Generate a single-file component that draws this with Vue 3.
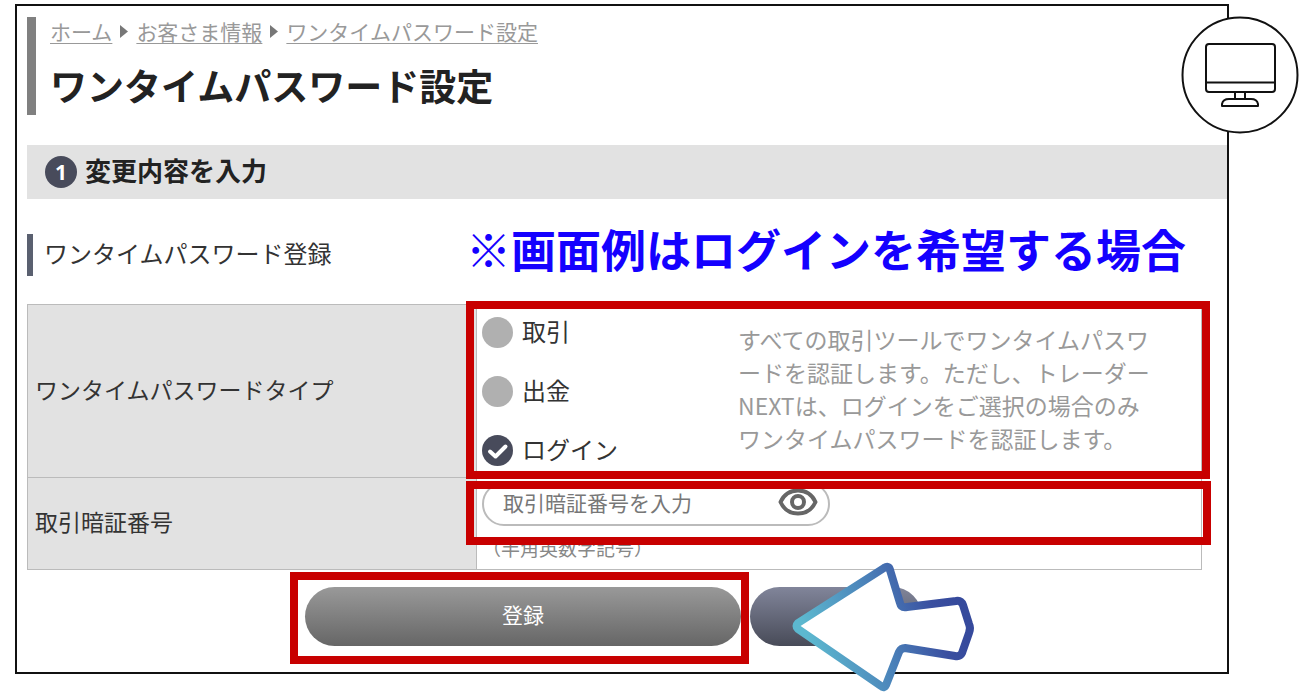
<script setup>
import { ref } from 'vue'

const crumbs = ['ホーム', 'お客さま情報', 'ワンタイムパスワード設定']
const types = [
  { value: 'trade', label: '取引' },
  { value: 'withdraw', label: '出金' },
  { value: 'login', label: 'ログイン' },
]
const selected = ref('login')
const pin = ref('')
const visible = ref(false)
</script>

<template>
  <div class="page">
    <main class="frame">
      <header class="head">
        <nav class="crumbs">
          <template v-for="(c, i) in crumbs" :key="c">
            <svg v-if="i" class="sep" viewBox="0 0 8 13" aria-hidden="true"><path d="M0 0L8 6.500L0 13Z" fill="#777" /></svg>
            <a href="#">{{ c }}</a>
          </template>
        </nav>
        <h1>ワンタイムパスワード設定</h1>
      </header>

      <h2 class="step"><span class="badge">1</span><span class="step-text">変更内容を入力</span></h2>

      <div class="subrow">
        <h3>ワンタイムパスワード登録</h3>
        <p class="note">※画面例はログインを希望する場合</p>
      </div>

      <table>
        <tbody>
          <tr class="row-type">
            <th scope="row">ワンタイムパスワードタイプ</th>
            <td>
              <div class="type">
                <div class="options">
                  <label v-for="t in types" :key="t.value" class="option">
                    <input v-model="selected" type="radio" name="otp-type" :value="t.value" />
                    <svg v-if="selected === t.value" class="tick" viewBox="0 0 31 31" aria-hidden="true">
                      <path d="M8 16.500L13.500 21.500L23.500 11.500" fill="none" stroke="#fff" stroke-width="4" stroke-linecap="round" stroke-linejoin="round" />
                    </svg>
                    <span>{{ t.label }}</span>
                  </label>
                </div>
                <p class="desc">すべての取引ツールでワンタイムパスワ<br />ードを認証します。ただし、トレーダー<br />NEXTは、ログインをご選択の場合のみ<br />ワンタイムパスワードを認証します。</p>
              </div>
              <div class="mark mark-type"></div>
            </td>
          </tr>
          <tr class="row-pin">
            <th scope="row"><label for="pin">取引暗証番号</label></th>
            <td>
              <div class="field">
                <input id="pin" v-model="pin" :type="visible ? 'text' : 'password'" placeholder="取引暗証番号を入力" />
                <button type="button" class="eye" aria-label="表示" @click="visible = !visible">
                  <svg viewBox="0 0 40 28" fill="none" stroke="#666" stroke-width="4">
                    <path d="M2.500 14C6 6.500 12.500 2.500 20 2.500S34 6.500 37.500 14C34 21.500 27.500 25.500 20 25.500S6 21.500 2.500 14Z" stroke-linejoin="round" />
                    <circle cx="20" cy="14" r="6" />
                  </svg>
                </button>
              </div>
              <p class="hint">（半角英数字記号）</p>
              <div class="mark mark-pin"></div>
            </td>
          </tr>
        </tbody>
      </table>

      <div class="actions">
        <div class="primary">
          <button type="button" class="btn submit">登録</button>
          <div class="mark mark-submit"></div>
        </div>
        <button type="button" class="btn back" aria-label="戻る"></button>
        <svg class="arrow" viewBox="0 0 184 132" aria-hidden="true">
          <defs>
            <linearGradient id="arrow-stroke" gradientUnits="userSpaceOnUse" x1="20" y1="90" x2="165" y2="45">
              <stop offset="0" stop-color="#5cb8cf" />
              <stop offset="0.500" stop-color="#4a7fb8" />
              <stop offset="0.850" stop-color="#3a4fa0" />
              <stop offset="1" stop-color="#364a9c" />
            </linearGradient>
          </defs>
          <path d="M6 61Q3 64 6 67L89 124Q92 127 94 123L107 90Q109 86 113 86L163 94Q168 95 170 91L177 71Q179 66 177 62L171 43Q169 38 164 39L115 45Q109 46 108 41L98 8Q97 3 92 6Z" fill="#fff" stroke="url(#arrow-stroke)" stroke-width="8" stroke-linejoin="round" />
        </svg>
      </div>

      <svg class="device" viewBox="0 0 118 118" aria-hidden="true">
        <circle cx="59" cy="59" r="57.500" fill="#fff" stroke="#111" stroke-width="2" />
        <g fill="none" stroke="#111" stroke-width="2" stroke-linejoin="round">
          <rect x="25" y="28" width="69" height="48" rx="3" />
          <path d="M25 66.500H94M54 76V83M64 76V83M41 90V88Q42 83 48 83H70Q76 83 77 88V90Z" />
        </g>
      </svg>
    </main>
  </div>
</template>

<style>
body {
  margin: 0;
  background: #fff;
}
</style>

<style scoped>
* {
  box-sizing: border-box;
}
.page {
  padding: 4px 70px 23px 15px;
  font-family: "Noto Sans CJK JP", sans-serif;
  color: #333;
}
.frame {
  position: relative;
  border: 2px solid #111;
  padding: 11px 0 26px 10px;
}
h1, h2, h3, p {
  margin: 0;
}
.head {
  border-left: 9px solid #808080;
  padding: 0 0 2px 14px;
}
.crumbs {
  display: flex;
  align-items: center;
  gap: 8px;
  font-size: 21px;
  line-height: 28px;
}
.crumbs a {
  color: #999;
  text-underline-offset: 3px;
  text-decoration-thickness: 1px;
}
.sep {
  width: 8px;
  height: 13px;
}
h1 {
  margin-top: 12px;
  font-size: 37px;
  line-height: 56px;
  font-weight: 700;
  color: #222;
}
.step {
  display: flex;
  align-items: center;
  gap: 8px;
  margin-top: 30px;
  padding: 0 18px;
  height: 54px;
  background: #e2e2e2;
  font-size: 26px;
  font-weight: 700;
  color: #222;
}
.step-text {
  padding-bottom: 6px;
}
.badge {
  width: 32px;
  height: 32px;
  border-radius: 50%;
  background: #484b5b;
  color: #fff;
  font: 700 21px/32px "Open Sans", sans-serif;
  text-align: center;
}
.subrow {
  display: grid;
  grid-template-columns: 439px 1fr;
  align-items: start;
  margin: 35px 25px 0 0;
}
h3 {
  border-left: 6px solid #5a6070;
  padding: 0 0 4px 11px;
  font-size: 24px;
  line-height: 38px;
  font-weight: 400;
}
.note {
  color: #1400ff;
  font-size: 45px;
  line-height: 30px;
  font-weight: 700;
  white-space: nowrap;
}
table {
  width: calc(100% - 25px);
  margin-top: 28px;
  border-collapse: collapse;
  table-layout: fixed;
}
th, td {
  border: 1px solid #bbb;
  padding: 0;
}
th {
  width: 449px;
  padding: 0 0 5px 7px;
  background: #e2e2e2;
  font-size: 23px;
  font-weight: 400;
  text-align: left;
}
td {
  position: relative;
  padding-left: 5px;
  vertical-align: top;
}
.row-type {
  height: 173px;
}
.row-pin {
  height: 92px;
}
.type {
  display: flex;
}
.options {
  flex: 0 0 256px;
  display: grid;
  gap: 28px;
  padding-top: 12px;
}
.option {
  position: relative;
  display: flex;
  align-items: center;
  gap: 9px;
  height: 31px;
  font-size: 24px;
}
.option span {
  padding-bottom: 5px;
}
.option input {
  appearance: none;
  width: 31px;
  height: 31px;
  margin: 0;
  border-radius: 50%;
  background: #b0b0b0;
}
.option input:checked {
  background: #484b5b;
}
.tick {
  position: absolute;
  left: 0;
  top: 0;
  width: 31px;
  height: 31px;
}
.desc {
  padding-top: 18px;
  font-size: 23px;
  line-height: 33px;
  color: #999;
  white-space: nowrap;
}
.field {
  display: flex;
  align-items: center;
  width: 348px;
  height: 44px;
  margin-top: 4px;
  padding: 0 10px 4px 19px;
  border: 2px solid #bbb;
  border-radius: 22px;
}
.field input {
  flex: 1;
  min-width: 0;
  padding: 0;
  border: 0;
  outline: 0;
  background: none;
  font: 21px/30px "Noto Sans CJK JP", sans-serif;
}
.field input::placeholder {
  color: #777;
  opacity: 1;
}
.eye {
  width: 40px;
  height: 28px;
  padding: 0;
  border: 0;
  background: none;
}
.eye svg {
  display: block;
}
.hint {
  margin-top: 8px;
  font-size: 19px;
  line-height: 28px;
  color: #888;
}
.mark {
  position: absolute;
  border: 8px solid #c80000;
  pointer-events: none;
}
.mark-type {
  inset: -4px -9px -2px -11px;
}
.mark-pin {
  inset: 3px -10px 24px -11px;
}
.mark-submit {
  inset: -15px -8px -18px -15px;
}
.actions {
  position: relative;
  display: flex;
  gap: 9px;
  margin-top: 17px;
  padding-left: 278px;
}
.primary {
  position: relative;
}
.btn {
  display: block;
  height: 59px;
  border: 0;
  border-radius: 30px;
  color: #fff;
  font: 21px/30px "Noto Sans CJK JP", sans-serif;
}
.submit {
  width: 436px;
  padding: 0 0 5px;
  background: linear-gradient(#999, #666);
}
.back {
  width: 172px;
  background: linear-gradient(#81859a, #484b58);
}
.arrow {
  position: absolute;
  left: 765px;
  top: -25px;
  width: 184px;
  height: 132px;
}
.device {
  position: absolute;
  top: 10px;
  right: -72px;
  width: 118px;
  height: 118px;
}
</style>
